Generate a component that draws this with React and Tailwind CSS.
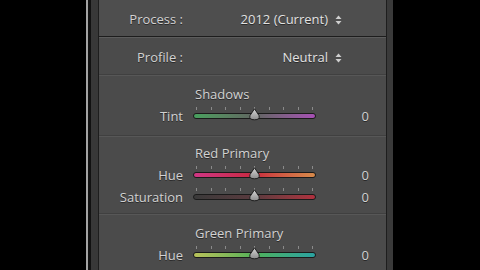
const font = { fontFamily: '"Open Sans", "Liberation Sans", sans-serif' };

function Arrows() {
  return (
    <svg width="7" height="10" viewBox="0 0 7 10" className="shrink-0">
      <path d="M3.5 0.5 L6.5 4 L0.5 4 Z" fill="#cfcfcf" />
      <path d="M3.5 9.5 L6.5 6 L0.5 6 Z" fill="#cfcfcf" />
    </svg>
  );
}

function Thumb() {
  return (
    <svg width="13" height="13" viewBox="0 0 13 13" className="absolute left-[55px] top-[3px]">
      <defs>
        <linearGradient id="thumbFill" x1="0" y1="0" x2="0" y2="1">
          <stop offset="0" stopColor="#d6d6d6" />
          <stop offset="1" stopColor="#8c8c8c" />
        </linearGradient>
      </defs>
      <path d="M6.5 0.8 L11 7.5 Q12.3 11.8 6.5 11.8 Q0.7 11.8 2 7.5 Z" fill="url(#thumbFill)" stroke="#1c1c1c" strokeWidth="1" />
    </svg>
  );
}

function Slider({ track }) {
  return (
    <div className="relative w-[123px] h-[22px] flex flex-col pt-[2px] shrink-0">
      <div className="flex justify-between px-[3px] h-[3px]">
        {Array.from({ length: 9 }).map((_, i) => (
          <div key={i} className="w-px h-[3px] bg-[#8a8a8a]" />
        ))}
      </div>
      <div className={`mt-[3px] h-[6px] rounded-full border border-[#1a1a1a] ${track}`} />
      <Thumb />
    </div>
  );
}

function SliderRow({ label, track }) {
  return (
    <div className="flex items-center h-[22px]">
      <div className="w-[84px] text-right pt-[1px]">{label}</div>
      <div className="ml-[10px]">
        <Slider track={track} />
      </div>
      <div className="flex-1 text-right pr-[17px] pt-[1px]">0</div>
    </div>
  );
}

function Heading({ children }) {
  return <div className="h-[22px] flex items-center pl-[96px] pt-[1px]">{children}</div>;
}

export default function App() {
  return (
    <div className="w-[480px] h-[270px] bg-black flex overflow-hidden" style={font}>
      <div className="w-[86px]" />
      <div className="w-[2px] bg-[#a3a3a3]" />
      <div className="w-[3px] bg-[#111]" />
      <div className="w-[7px] bg-[#383838]" />
      <div className="w-[289px] bg-[#4b4b4b] border-x border-[#1e1e1e] text-[13px] text-[#d2d2d2] [text-shadow:0_1px_0_#2a2a2a]">
        <div className="h-[37px] flex items-center pt-[4px] border-b border-[#1d1d1d] bg-[#4e4e4e]">
          <div className="w-[84px] text-right">Process :</div>
          <div className="flex-1 flex items-center justify-end gap-[7px] pr-[44px] text-[#e2e2e2]">
            <span>2012 (Current)</span>
            <Arrows />
          </div>
        </div>
        <div className="h-[38px] flex items-center pt-[4px] border-t border-[#5c5c5c] border-b border-b-[#404040]">
          <div className="w-[84px] text-right">Profile :</div>
          <div className="flex-1 flex items-center justify-end gap-[7px] pr-[44px] text-[#e2e2e2]">
            <span>Neutral</span>
            <Arrows />
          </div>
        </div>
        <div className="pt-[7px] pb-[8px] border-t border-[#575757] border-b border-b-[#404040]">
          <Heading>Shadows</Heading>
          <SliderRow label="Tint" track="bg-linear-to-r from-[#47a05e] via-[#5f6560] to-[#a64fb4]" />
        </div>
        <div className="pt-[5px] pb-[5px] border-t border-[#575757] border-b border-b-[#404040]">
          <Heading>Red Primary</Heading>
          <SliderRow label="Hue" track="bg-linear-to-r from-[#d03684] via-[#c8283e] to-[#d68a4a]" />
          <SliderRow label="Saturation" track="bg-linear-to-r from-[#3a3a3a] via-[#5a3a3e] to-[#b0303e]" />
        </div>
        <div className="pt-[7px] border-t border-[#575757]">
          <Heading>Green Primary</Heading>
          <SliderRow label="Hue" track="bg-linear-to-r from-[#b8c25a] via-[#4fb058] to-[#2aa2a0]" />
        </div>
      </div>
      <div className="w-[6px] bg-[#3a3a3a]" />
      <div className="flex-1 bg-black" />
    </div>
  );
}
